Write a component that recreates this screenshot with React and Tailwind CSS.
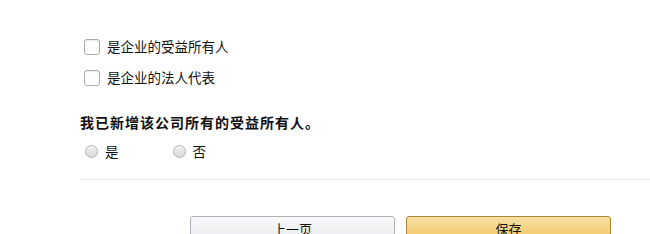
import React from 'react';

const Checkbox = ({ label }) => (
    <label className="flex items-center h-[18px] gap-[7px] text-[13.5px] leading-none text-[#111]">
        <span className="w-[16px] h-[16px] rounded-[3px] border border-[#a9a9a9] bg-white shadow-[inset_0_1px_1px_rgba(0,0,0,0.08)]"></span>
        <span>{label}</span>
    </label>
);

const Radio = ({ label }) => (
    <label className="flex items-center gap-[7px] text-[13.5px] leading-none text-[#111]">
        <span className="w-[13px] h-[13px] rounded-full border border-[#b4b4b4] bg-gradient-to-b from-[#f3f3f3] to-[#d6d6d6]"></span>
        <span>{label}</span>
    </label>
);

const App = () => {
    return (
        <div className="w-[650px] h-[234px] bg-white overflow-hidden font-['Noto_Sans_CJK_SC',sans-serif]">
            <div className="pl-[80px] pt-[38px]">
                {/* Role checkboxes */}
                <div className="pl-[4px] flex flex-col gap-[13px]">
                    <Checkbox label="是企业的受益所有人" />
                    <Checkbox label="是企业的法人代表" />
                </div>

                {/* Confirmation */}
                <h3 className="mt-[28px] text-[14px] font-bold leading-none tracking-[1px] text-[#111]">
                    我已新增该公司所有的受益所有人。
                </h3>
                <div className="mt-[16px] pl-[5px] flex items-center gap-[54px]">
                    <Radio label="是" />
                    <Radio label="否" />
                </div>

                <div className="mt-[20px] h-px bg-[#e7e7e7]"></div>

                {/* Actions */}
                <div className="mt-[36px] pl-[110px] flex gap-[11px]">
                    <button className="w-[205px] h-[31px] rounded-[3px] border border-[#adb1b8] bg-gradient-to-b from-[#f7f8fa] to-[#e7e9ec] text-[13px] text-[#111] pb-[4px]">
                        上一页
                    </button>
                    <button className="w-[205px] h-[31px] rounded-[3px] border border-[#a88734] bg-gradient-to-b from-[#f7dfa5] to-[#f0c14b] text-[13px] text-[#111] pb-[4px]">
                        保存
                    </button>
                </div>
            </div>
        </div>
    );
};

export default App;
